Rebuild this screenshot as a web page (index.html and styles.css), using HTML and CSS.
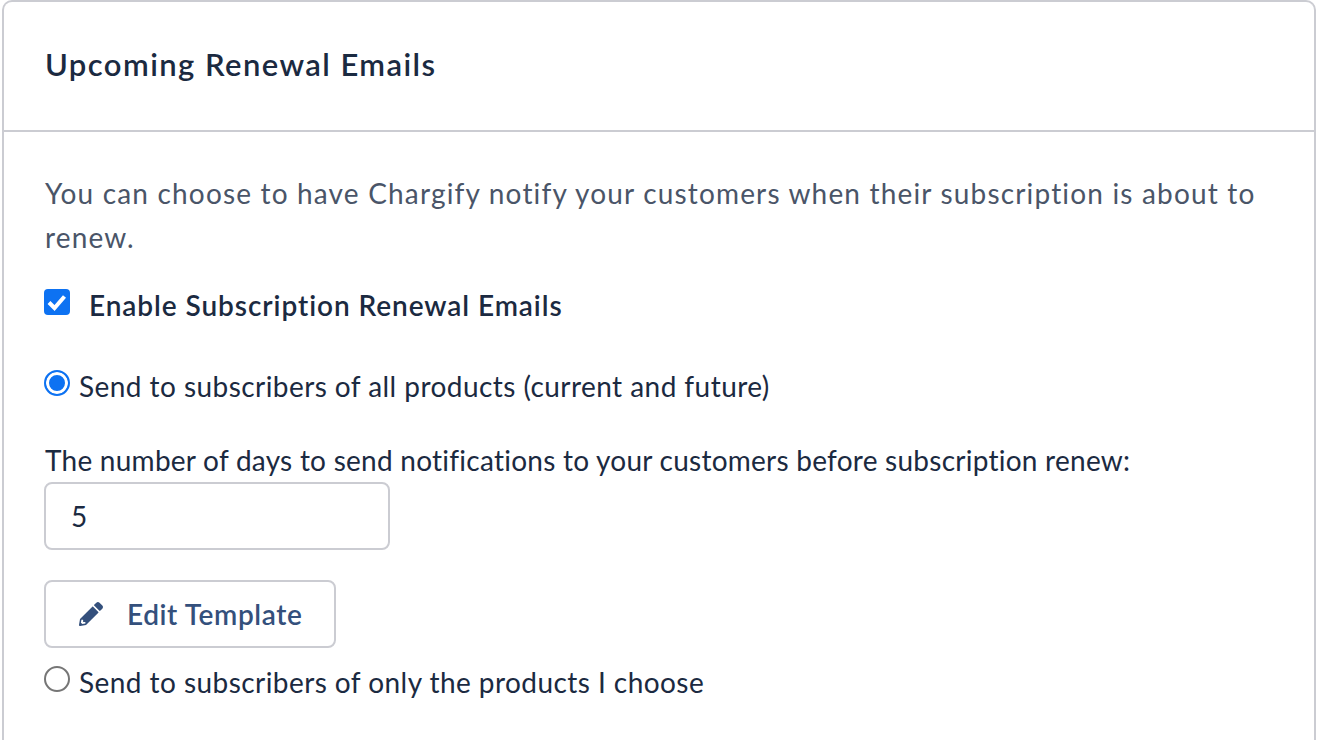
FILE: index.html
```html
<!DOCTYPE html>
<html lang="en">
<head>
  <meta charset="UTF-8" />
  <title>Upcoming Renewal Emails</title>
  <link rel="stylesheet" href="styles.css">
</head>
<body>
  <div class="card">
    <header class="card-header">
      <h2>Upcoming Renewal Emails</h2>
    </header>
    <div class="card-body">
      <p class="intro">You can choose to have Chargify notify your customers when their subscription is about to renew.</p>

      <label class="enable-row">
        <span class="checkbox">
          <svg viewBox="0 0 26 26" width="26" height="26"><path d="M5 13.5l5.5 5.5 10-11.5" fill="none" stroke="#fff" stroke-width="4"/></svg>
        </span>
        <span>Enable Subscription Renewal Emails</span>
      </label>

      <label class="radio-row first-radio">
        <span class="radio checked"></span>
        <span>Send to subscribers of all products (current and future)</span>
      </label>

      <div class="days-group">
        <label for="days">The number of days to send notifications to your customers before subscription renew:</label>
        <input type="text" id="days" value="5" />
      </div>

      <button type="button" class="btn">
        <svg viewBox="0 0 512 512" width="24" height="24"><path fill="#34507c" d="M497.9 142.1l-46.1 46.1c-4.7 4.7-12.3 4.7-17 0l-111-111c-4.7-4.7-4.7-12.3 0-17l46.1-46.1c18.7-18.7 49.1-18.7 67.9 0l60.1 60.1c18.8 18.7 18.8 49.1 0 67.9zM284.2 99.8L21.6 362.4.4 483.9c-2.9 16.4 11.4 30.6 27.8 27.8l121.5-21.3 262.6-262.6c4.7-4.7 4.7-12.3 0-17l-111-111c-4.8-4.7-12.4-4.7-17.1 0zM88 424h48v36.3l-64.5 11.3-31.1-31.1L51.7 376H88v48z"/></svg>
        <span>Edit Template</span>
      </button>

      <label class="radio-row">
        <span class="radio"></span>
        <span>Send to subscribers of only the products I choose</span>
      </label>
    </div>
  </div>
</body>
</html>
```

FILE: styles.css
```css
:root {
  --border-color: #cbccd2;
  --text-dark: #1b2a41;
  --text-muted: #4a5568;
  --primary-color: #0d72f2;
}

html, body {
  height: 100%;
  overflow: hidden;
}

body {
  margin: 0;
  padding: 0 16px 0 2px;
  font-family: Lato, sans-serif;
  font-size: 28px;
  color: var(--text-dark);
  background: #fff;
}

.card {
  box-sizing: border-box;
  height: 100%;
  border: 2px solid var(--border-color);
  border-bottom: none;
  border-radius: 10px 10px 0 0;
}

.card-header {
  height: 130px;
  padding: 0 0 4px 41px;
  box-sizing: border-box;
  display: flex;
  align-items: center;
  border-bottom: 2px solid var(--border-color);
}

.card-header h2 {
  margin: 0;
  font-size: 31px;
  font-weight: 600;
  letter-spacing: 1.43px;
}

.card-body {
  padding: 39px 40px 0 41px;
}

.intro {
  margin: 0;
  color: var(--text-muted);
  line-height: 44px;
  letter-spacing: 1.17px;
}

.enable-row {
  display: flex;
  align-items: center;
  gap: 19px;
  margin: 24px 0 0 -1px;
  height: 44px;
  font-weight: 600;
  letter-spacing: 0.93px;
}

.checkbox {
  width: 26px;
  height: 26px;
  background: var(--primary-color);
  border-radius: 4px;
  display: block;
  position: relative;
  top: -3px;
}

.checkbox svg {
  display: block;
}

.radio-row {
  display: flex;
  align-items: center;
  gap: 9px;
  height: 44px;
  margin-left: -1px;
  letter-spacing: 0.44px;
}

.first-radio {
  margin-top: 37px;
}

.radio {
  width: 26px;
  height: 26px;
  box-sizing: border-box;
  border: 2px solid #767676;
  border-radius: 50%;
  position: relative;
  top: -3px;
}

.radio.checked {
  border-color: var(--primary-color);
  background: var(--primary-color);
  box-shadow: inset 0 0 0 3px #fff;
}

.days-group {
  margin-top: 30px;
}

.days-group label {
  display: block;
  line-height: 44px;
  letter-spacing: 0.25px;
}

.days-group input {
  display: block;
  width: 346px;
  height: 68px;
  box-sizing: border-box;
  margin: 0 0 0 -1px;
  padding: 0 25px;
  border: 2px solid var(--border-color);
  border-radius: 8px;
  font: inherit;
  color: var(--text-dark);
}

.btn {
  display: flex;
  align-items: center;
  gap: 24px;
  width: 292px;
  height: 68px;
  margin: 30px 0 0 -1px;
  padding: 0 0 0 33px;
  background: #fff;
  border: 2px solid var(--border-color);
  border-radius: 8px;
  font: inherit;
  font-weight: 600;
  letter-spacing: 0.6px;
  color: #34507c;
  white-space: nowrap;
}

.btn svg {
  flex: none;
}

.btn + .radio-row {
  margin-top: 12px;
}
```
